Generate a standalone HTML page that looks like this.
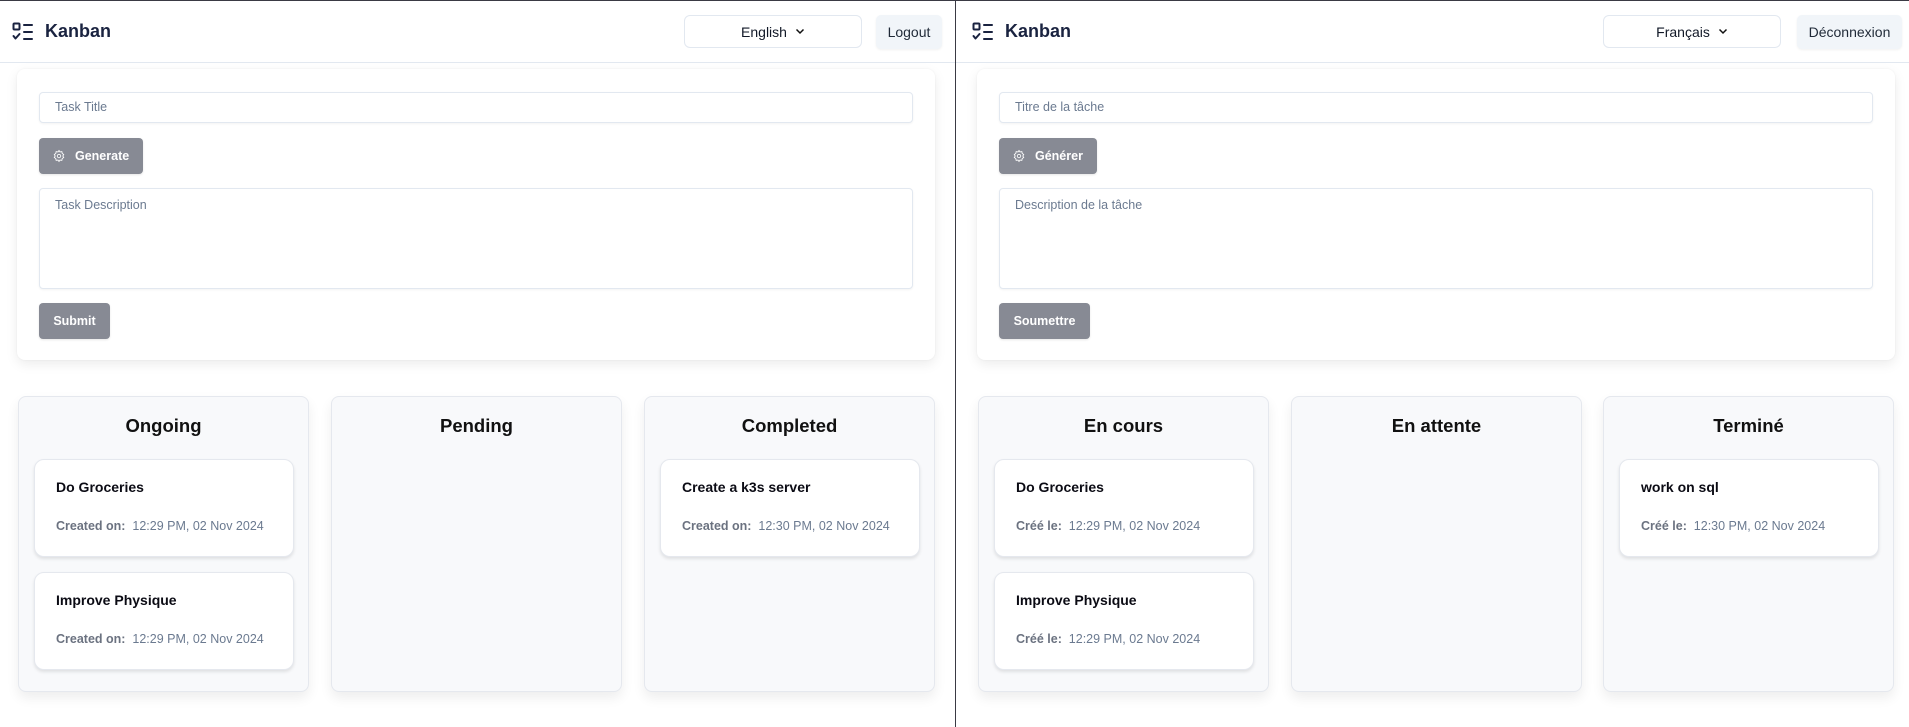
<!DOCTYPE html>
<html><head><meta charset="utf-8"><style>
*{box-sizing:border-box;margin:0;padding:0}
body{width:1909px;height:727px;position:relative;overflow:hidden;background:#fff;font-family:"Liberation Sans",Arial,sans-serif;color:#111827}
.a{position:absolute}
.topline{left:0;top:0;width:1909px;height:1px;background:#3a3a44}
.hline{left:0;top:62px;width:1909px;height:1px;background:#e2e8f0}
.div{left:955px;top:0;width:1px;height:727px;background:#3a3a44}
.pane{position:absolute;top:0;width:955px;height:727px}
.logo{left:12px;top:22px;width:22px;height:20px}
.brand{left:45px;top:21px;font-size:18px;font-weight:bold;color:#1a2340}
.sel{top:15px;height:33px;width:178px;border:1px solid #e2e8f0;border-radius:6px;background:#fff;font-size:14px;color:#111827;display:flex;align-items:center;justify-content:center;gap:8px}
.btn2{top:15px;height:34px;background:#f1f5f9;border-radius:5px;font-size:14px;color:#1f2937;display:flex;align-items:center;justify-content:center;box-shadow:0 1px 2px rgba(0,0,0,.06)}
.form{left:17px;top:69px;width:918px;height:291px;background:#fff;border-radius:8px;box-shadow:0 4px 12px rgba(0,0,0,.08),0 0 2px rgba(0,0,0,.05)}
.inp{left:39px;width:874px;background:#fff;border:1px solid #e2e8f0;border-radius:4px;box-shadow:0 1px 2px rgba(0,0,0,.05);font-size:12.5px;color:#6b7a90;padding-left:15px}
.gbtn{left:39px;background:#878a94;border-radius:4px;color:#fff;font-weight:bold;font-size:12.5px;display:flex;align-items:center;box-shadow:0 1px 2px rgba(0,0,0,.1)}
.col{top:396px;width:291px;height:296px;background:#f8f9fb;border:1px solid #e5e8ee;border-radius:8px;box-shadow:0 6px 12px rgba(0,0,0,.07)}
.col h2{position:absolute;top:18px;left:0;width:100%;text-align:center;font-size:18.5px;font-weight:bold;color:#111}
.card{position:absolute;left:15px;width:260px;height:98px;background:#fff;border:1px solid #e5e8ee;border-radius:10px;box-shadow:0 2px 3px rgba(0,0,0,.1)}
.card .t{position:absolute;left:21px;top:19px;font-size:14px;font-weight:bold;color:#0b0b14}
.card .c{position:absolute;left:21px;top:59px;font-size:12.5px;color:#6b7a90;white-space:nowrap}
.card .c b{color:#6b7280}
</style></head><body>
<div class="a topline"></div>
<div class="a hline"></div>
<div class="a div"></div>

<!-- LEFT -->
<div class="pane" style="left:0">
<svg class="a logo" viewBox="0 0 22 20" fill="none" stroke="#1a2340" stroke-width="2" stroke-linecap="round" stroke-linejoin="round"><rect x="1.5" y="1.5" width="6" height="6" rx="1"/><path d="M1.5 14l2 2.5 4-4.5"/><path d="M12 3h8M12 10h8M12 17h8"/></svg>
<div class="a brand">Kanban</div>
<div class="a sel" style="left:684px">English <svg width="10" height="7" viewBox="0 0 10 7"><path d="M1.5 1.5l3.5 3.5 3.5-3.5" stroke="#111" stroke-width="1.5" fill="none"/></svg></div>
<div class="a btn2" style="left:876px;width:66px">Logout</div>
<div class="a form"></div>
<div class="a inp" style="top:92px;height:31px;line-height:29px">Task Title</div>
<div class="a gbtn" style="top:138px;width:104px;height:36px;padding-left:13px"><svg width="14" height="14" viewBox="0 0 24 24" fill="none" stroke="#fff" stroke-width="1.5"><circle cx="12" cy="12" r="3"/><path d="M12 2.5l1.8 2.6 3.1-.6.6 3.1 2.6 1.8-1.6 2.6 1.6 2.6-2.6 1.8-.6 3.1-3.1-.6L12 21.5l-1.8-2.6-3.1.6-.6-3.1-2.6-1.8 1.6-2.6-1.6-2.6 2.6-1.8.6-3.1 3.1.6z"/></svg><span style="margin-left:9px">Generate</span></div>
<div class="a inp" style="top:188px;height:101px;padding-top:9px">Task Description</div>
<div class="a gbtn" style="top:303px;width:71px;height:36px;justify-content:center">Submit</div>
<div class="a col" style="left:18px"><h2>Ongoing</h2>
<div class="card" style="top:62px"><div class="t">Do Groceries</div><div class="c"><b>Created on:</b>&nbsp; 12:29 PM, 02 Nov 2024</div></div>
<div class="card" style="top:175px"><div class="t">Improve Physique</div><div class="c"><b>Created on:</b>&nbsp; 12:29 PM, 02 Nov 2024</div></div>
</div>
<div class="a col" style="left:331px"><h2>Pending</h2></div>
<div class="a col" style="left:644px"><h2>Completed</h2>
<div class="card" style="top:62px"><div class="t">Create a k3s server</div><div class="c"><b>Created on:</b>&nbsp; 12:30 PM, 02 Nov 2024</div></div>
</div>
</div>

<!-- RIGHT -->
<div class="pane" style="left:960px">
<svg class="a logo" viewBox="0 0 22 20" fill="none" stroke="#1a2340" stroke-width="2" stroke-linecap="round" stroke-linejoin="round"><rect x="1.5" y="1.5" width="6" height="6" rx="1"/><path d="M1.5 14l2 2.5 4-4.5"/><path d="M12 3h8M12 10h8M12 17h8"/></svg>
<div class="a brand">Kanban</div>
<div class="a form"></div>
<div class="a inp" style="top:92px;height:31px;line-height:29px">Titre de la tâche</div>
<div class="a gbtn" style="top:138px;width:98px;height:36px;padding-left:13px"><svg width="14" height="14" viewBox="0 0 24 24" fill="none" stroke="#fff" stroke-width="1.5"><circle cx="12" cy="12" r="3"/><path d="M12 2.5l1.8 2.6 3.1-.6.6 3.1 2.6 1.8-1.6 2.6 1.6 2.6-2.6 1.8-.6 3.1-3.1-.6L12 21.5l-1.8-2.6-3.1.6-.6-3.1-2.6-1.8 1.6-2.6-1.6-2.6 2.6-1.8.6-3.1 3.1.6z"/></svg><span style="margin-left:9px">Générer</span></div>
<div class="a inp" style="top:188px;height:101px;padding-top:9px">Description de la tâche</div>
<div class="a gbtn" style="top:303px;width:91px;height:36px;justify-content:center">Soumettre</div>
<div class="a col" style="left:18px"><h2>En cours</h2>
<div class="card" style="top:62px"><div class="t">Do Groceries</div><div class="c"><b>Créé le:</b>&nbsp; 12:29 PM, 02 Nov 2024</div></div>
<div class="card" style="top:175px"><div class="t">Improve Physique</div><div class="c"><b>Créé le:</b>&nbsp; 12:29 PM, 02 Nov 2024</div></div>
</div>
<div class="a col" style="left:331px"><h2>En attente</h2></div>
<div class="a col" style="left:643px"><h2>Terminé</h2>
<div class="card" style="top:62px"><div class="t">work on sql</div><div class="c"><b>Créé le:</b>&nbsp; 12:30 PM, 02 Nov 2024</div></div>
</div>
</div>
<div class="a sel" style="left:1603px">Français <svg width="10" height="7" viewBox="0 0 10 7"><path d="M1.5 1.5l3.5 3.5 3.5-3.5" stroke="#111" stroke-width="1.5" fill="none"/></svg></div>
<div class="a btn2" style="left:1797px;width:105px">Déconnexion</div>
</body></html>
